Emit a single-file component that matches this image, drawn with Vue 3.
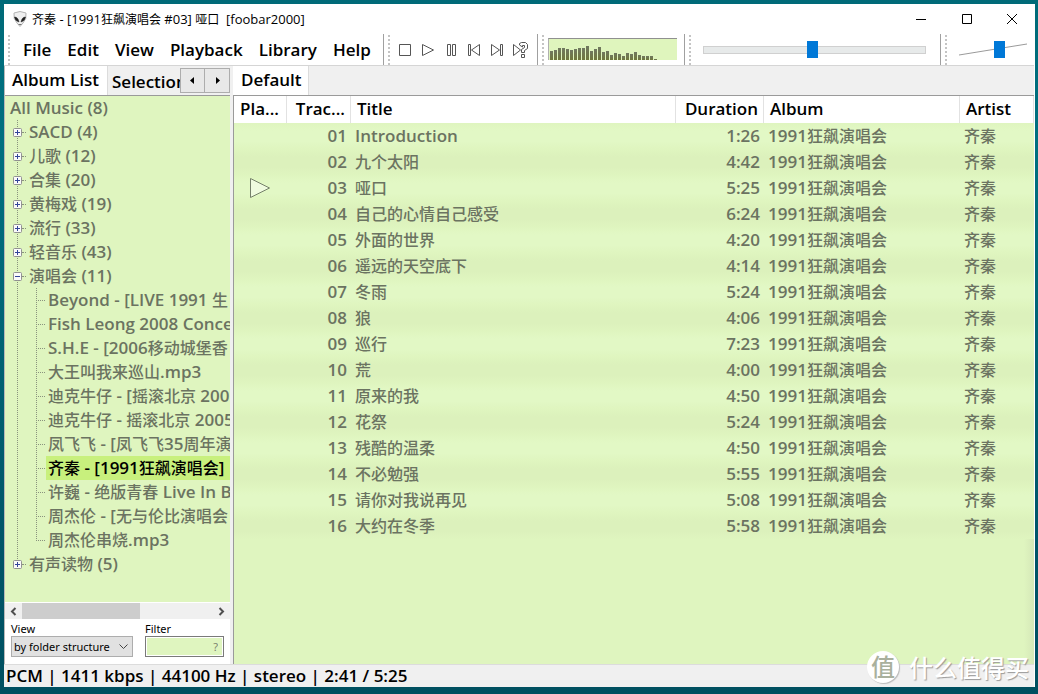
<script setup>
import { ref } from 'vue'

const menus = ['File', 'Edit', 'View', 'Playback', 'Library', 'Help']

const levels = [9, 10, 12, 12, 11, 10, 11, 12, 12, 14, 9, 11, 13, 8, 9, 5, 7, 6, 4, 7, 6, 8, 5, 4, 4, 4, 1]

const folders = [
  { name: 'SACD (4)' },
  { name: '儿歌 (12)' },
  { name: '合集 (20)' },
  { name: '黄梅戏 (19)' },
  { name: '流行 (33)' },
  { name: '轻音乐 (43)' },
  {
    name: '演唱会 (11)',
    children: [
      'Beyond - [LIVE 1991 生',
      'Fish Leong 2008 Conce',
      'S.H.E - [2006移动城堡香',
      '大王叫我来巡山.mp3',
      '迪克牛仔 - [摇滚北京 200',
      '迪克牛仔 - 摇滚北京 2005',
      '凤飞飞 - [凤飞飞35周年演',
      '齐秦 - [1991狂飙演唱会]',
      '许巍 - 绝版青春 Live In B',
      '周杰伦 - [无与伦比演唱会',
      '周杰伦串烧.mp3'
    ]
  },
  { name: '有声读物 (5)' }
]
const selected = ref('齐秦 - [1991狂飙演唱会]')

const tracks = [
  ['Introduction', '1:26'],
  ['九个太阳', '4:42'],
  ['哑口', '5:25'],
  ['自己的心情自己感受', '6:24'],
  ['外面的世界', '4:20'],
  ['遥远的天空底下', '4:14'],
  ['冬雨', '5:24'],
  ['狼', '4:06'],
  ['巡行', '7:23'],
  ['荒', '4:00'],
  ['原来的我', '4:50'],
  ['花祭', '5:24'],
  ['残酷的温柔', '4:50'],
  ['不必勉强', '5:55'],
  ['请你对我说再见', '5:08'],
  ['大约在冬季', '5:58']
]
const playing = ref(2)
const seek = ref(49)
const volume = ref(60)
const filter = ref('')

// Splits a label into Latin and Han runs, which are set at different sizes.
const runs = (text) =>
  text.split(/([\u4e00-\u9fff]+)/).filter(Boolean).map((t) => ({ t, han: /[\u4e00-\u9fff]/.test(t) }))
</script>

<template>
  <div class="desktop">
    <main class="window">
      <header class="titlebar">
        <svg class="logo" width="14" height="16" viewBox="0 0 14 16">
          <path d="M1 2 Q7 -1 13 2 Q14 8 10 12 L7 15.500 L4 12 Q0 8 1 2Z" fill="#f0f0f0" stroke="#b4b4b4" stroke-width="1" />
          <path d="M1.500 6 Q5 6 6 11 Q2 10 1.500 6Z M12.500 6 Q9 6 8 11 Q12 10 12.500 6Z" fill="#222" stroke="#222" stroke-width="0.500" />
          <path d="M5.500 13.500h3" stroke="#777" />
        </svg>
        <h1><span v-for="(r, i) in runs('齐秦 - [1991狂飙演唱会 #03] 哑口\u00a0 [foobar2000]')" :key="i" :class="{ small: r.han }">{{ r.t }}</span></h1>
        <div class="controls">
          <button aria-label="Minimize"><svg width="12" height="12"><path d="M1 6.500h10" stroke="#000" /></svg></button>
          <button aria-label="Maximize"><svg width="12" height="12"><path d="M1.500 1.500h9v9h-9z" fill="none" stroke="#000" /></svg></button>
          <button aria-label="Close"><svg width="12" height="12"><path d="M1 1l10 10M11 1L1 11" stroke="#000" /></svg></button>
        </div>
      </header>

      <div class="toolbar">
        <nav class="band menu">
          <button v-for="m in menus" :key="m">{{ m }}</button>
        </nav>
        <div class="band transport">
          <button aria-label="Stop"><svg width="17" height="17"><path d="M2.500 3.500h11v11h-11z" /></svg></button>
          <button aria-label="Play"><svg width="17" height="17"><path d="M2.500 3.500v11l11-5.500z" /></svg></button>
          <button aria-label="Pause"><svg width="17" height="17"><path d="M4.500 3.500h3v11h-3zM9.500 3.500h3v11h-3z" /></svg></button>
          <button aria-label="Previous"><svg width="17" height="17"><path d="M2.500 3.500h2v11h-2zM13.500 3.500v11l-8-5.500z" /></svg></button>
          <button aria-label="Next"><svg width="17" height="17"><path d="M11.500 3.500h2v11h-2zM2.500 3.500v11l8-5.500z" /></svg></button>
          <button aria-label="Random">
            <svg width="17" height="17">
              <path d="M1.500 3.500v11l7-5.500zM7.500 4V2.500l2-1h4l2 2v4l-3 2v2h-3v-3l3-2v-2h-2v1.500zM9.500 13.500h3v3h-3z" />
            </svg>
          </button>
        </div>
        <div class="band visual">
          <div class="spectrum">
            <i v-for="(h, i) in levels" :key="i" :style="{ height: h + 'px' }"></i>
          </div>
        </div>
        <div class="band seek">
          <input v-model="seek" type="range" min="0" max="100" aria-label="Seek" />
        </div>
        <div class="band volume">
          <svg width="70" height="13" viewBox="0 0 70 13" preserveAspectRatio="none"><path d="M0 12L69 1" stroke="#999" fill="none" /></svg>
          <input v-model="volume" type="range" min="0" max="100" aria-label="Volume" />
        </div>
      </div>

      <div class="panes">
        <section class="side">
          <div class="tabs">
            <button class="tab active">Album List</button>
            <button class="tab clipped">Selection</button>
            <div class="arrows">
              <button aria-label="Previous tab"><svg width="5" height="7"><path d="M4 0v7L0 3.500z" /></svg></button>
              <button aria-label="Next tab"><svg width="5" height="7"><path d="M1 0v7L5 3.500z" /></svg></button>
            </div>
          </div>

          <div class="tree">
            <div class="root">All Music (8)</div>
            <ul class="folders">
              <li v-for="f in folders" :key="f.name">
                <div class="node">
                  <button class="expander" :aria-label="f.children ? 'Collapse' : 'Expand'">
                    <svg width="9" height="9">
                      <rect x="0.500" y="0.500" width="8" height="8" rx="1" fill="#fafafa" stroke="#919191" />
                      <path :d="f.children ? 'M2 4.500h5' : 'M2 4.500h5M4.500 2v5'" stroke="#33449a" />
                    </svg>
                  </button>
                  <span class="stub"></span>
                  <span class="label"><span v-for="(r, i) in runs(f.name)" :key="i" :class="{ han: r.han }">{{ r.t }}</span></span>
                </div>
                <ul v-if="f.children" class="albums">
                  <li v-for="c in f.children" :key="c">
                    <div class="node" :class="{ selected: c === selected }" @click="selected = c">
                      <span class="stub"></span>
                      <span class="label"><span v-for="(r, i) in runs(c)" :key="i" :class="{ han: r.han }">{{ r.t }}</span></span>
                    </div>
                  </li>
                </ul>
              </li>
            </ul>
          </div>

          <div class="hscroll">
            <button aria-label="Scroll left"><svg width="7" height="9"><path d="M5.500 1L2 4.500 5.500 8" /></svg></button>
            <div class="rail"><div class="thumb"></div></div>
            <button aria-label="Scroll right"><svg width="7" height="9"><path d="M1.500 1L5 4.500 1.500 8" /></svg></button>
          </div>

          <form class="options" @submit.prevent>
            <div class="field">
              <label for="view">View</label>
              <div class="picker">
                <select id="view"><option>by folder structure</option></select>
                <svg width="9" height="6"><path d="M0.500 0.500l4 4 4-4" fill="none" stroke="#444" /></svg>
              </div>
            </div>
            <div class="field narrow">
              <label for="filter">Filter</label>
              <input id="filter" v-model="filter" type="text" placeholder="?" />
            </div>
          </form>
        </section>

        <section class="main">
          <div class="tabs">
            <button class="tab active">Default</button>
          </div>
          <div class="list">
            <table>
              <colgroup>
                <col class="c-play" /><col class="c-no" /><col /><col class="c-time" /><col class="c-album" /><col class="c-artist" />
              </colgroup>
              <thead>
                <tr>
                  <th>Pla...</th>
                  <th class="right">Trac...</th>
                  <th>Title</th>
                  <th class="right">Duration</th>
                  <th>Album</th>
                  <th>Artist</th>
                </tr>
              </thead>
              <tbody>
                <tr v-for="(t, n) in tracks" :key="n" @dblclick="playing = n">
                  <td class="state">
                    <svg v-if="n === playing" width="22" height="22"><path d="M1.500 1.500v19l19-9.500z" fill="#effbdf" stroke="#75806a" /></svg>
                  </td>
                  <td class="right">{{ String(n + 1).padStart(2, '0') }}</td>
                  <td><span v-for="(r, i) in runs(t[0])" :key="i" :class="{ han: r.han }">{{ r.t }}</span></td>
                  <td class="right">{{ t[1] }}</td>
                  <td>1991<span class="han">狂飙演唱会</span></td>
                  <td><span class="han">齐秦</span></td>
                </tr>
              </tbody>
            </table>
          </div>
        </section>
      </div>

      <footer class="status">PCM | 1411 kbps | 44100 Hz | stereo | 2:41 / 5:25</footer>
    </main>

    <div class="watermark"><span class="badge">值</span><span>什么值得买</span></div>
  </div>
</template>

<style>
body {
  background: #00505f;
}
</style>

<style scoped>
* {
  box-sizing: border-box;
}
.desktop {
  position: relative;
  display: flex;
  min-height: 100vh;
  padding: 4px 3px 7px 4px;
  background: linear-gradient(#006a78, #007080 20%, #005468 80%, #005060);
  font: 600 17px/24px "Open Sans", "Noto Sans", "Noto Sans CJK SC", sans-serif;
  color: #000;
}
button {
  font: inherit;
  color: inherit;
  background: none;
  border: 0;
  padding: 0;
}
.han {
  font-size: 16px;
  line-height: 16px;
  font-weight: 500;
  font-family: "Noto Sans CJK SC", sans-serif;
}
.window {
  flex: 1;
  min-width: 0;
  display: flex;
  flex-direction: column;
  background: #fff;
  border-right: 1px solid #fff;
}

.titlebar {
  display: flex;
  align-items: center;
  height: 30px;
  padding-left: 9px;
}
h1 {
  flex: 1;
  margin: 0 0 0 5px;
  font: 400 13px/16px "Open Sans", "Noto Sans CJK SC", sans-serif;
}
.small {
  font-size: 12px;
  line-height: 12px;
}
.controls {
  display: flex;
}
.controls button {
  width: 46px;
  height: 28px;
  display: grid;
  place-items: center;
}
.controls button:last-child {
  width: 44px;
}

.toolbar {
  display: flex;
  height: 32px;
  border-bottom: 1px solid #d5d5d5;
}
.band {
  display: flex;
  align-items: center;
  padding-left: 9px;
  border-right: 1px solid #a0a0a0;
  background: repeating-linear-gradient(#c4c4c4 0 2px, transparent 2px 4px) 4px 1px / 2px 100% no-repeat;
}
.band:last-child {
  border-right: 0;
}
.menu {
  padding-right: 4px;
  padding-left: 11px;
}
.menu button {
  padding: 0 8px;
}
.transport {
  padding: 0 8px 0 13px;
  gap: 6px;
}
.transport svg {
  display: block;
  fill: none;
  stroke: #555;
}
.visual {
  padding: 0 7px 2px 10px;
}
.spectrum {
  display: flex;
  align-items: flex-end;
  gap: 1px;
  width: 129px;
  height: 22px;
  padding-left: 1px;
  background: #dff5bd;
  border-top: 1px solid #909090;
  border-left: 1px solid #b0b0b0;
}
.spectrum i {
  width: 3px;
  background: linear-gradient(#707860, #70783c);
}
input[type="range"] {
  appearance: none;
  margin: 0;
  height: 17px;
  background: transparent;
  min-width: 0;
}
input[type="range"]::-webkit-slider-runnable-track {
  height: 17px;
}
input[type="range"]::-webkit-slider-thumb {
  appearance: none;
  width: 11px;
  height: 17px;
  background: #0078d7;
}
.seek {
  flex: 1;
  padding: 0 14px 0 18px;
}
.seek input {
  width: 100%;
  background: linear-gradient(#d0d0d0, #d0d0d0) center / 100% 8px no-repeat;
}
.seek input::-webkit-slider-runnable-track {
  background: linear-gradient(#e7eaea, #e7eaea) center / calc(100% - 2px) 6px no-repeat;
}
.volume {
  display: grid;
  width: 93px;
  padding: 0 6px 0 18px;
}
.volume > * {
  grid-area: 1 / 1;
  width: 100%;
}

.panes {
  flex: 1;
  display: flex;
  background: #f0f0f0;
}
.side {
  display: flex;
  flex-direction: column;
  width: 226px;
  margin-right: 3px;
  border-left: 1px solid #b8b8b8;
}
.main {
  flex: 1;
  min-width: 0;
  display: flex;
  flex-direction: column;
}
.tabs {
  display: flex;
  height: 29px;
}
.tab {
  padding: 0 6px 2px 8px;
  border-right: 1px solid #dcdcdc;
  white-space: nowrap;
}
.tab.active {
  background: #fff;
}
.tab.clipped {
  flex: 1;
  min-width: 0;
  padding: 3px 0 0 4px;
  border: 0;
  overflow: hidden;
  text-align: left;
}
.side .tab.active {
  padding: 0 8px 2px 7px;
}
.arrows {
  display: flex;
  height: 25px;
  margin-top: 2px;
}
.arrows button {
  width: 25px;
  display: grid;
  place-items: center;
  border: 1px solid #adadad;
  background: #e8e8e8;
}
.arrows button + button {
  border-left: 0;
}

.tree {
  flex: 1;
  overflow: hidden;
  background: #dff5bf;
  border-top: 1px solid #9a9a9a;
  color: #6b7361;
  white-space: nowrap;
}
.root {
  padding-left: 5px;
}
ul {
  margin: 0;
  padding: 0;
  list-style: none;
}
.folders > li {
  padding-left: 8px;
  background: repeating-linear-gradient(#8a937e 0 1px, transparent 1px 2px) 12px 0 / 1px 100% no-repeat;
}
.folders > li:last-child {
  background-size: 1px 12px;
}
.albums {
  padding-left: 23px;
}
.albums > li {
  background: repeating-linear-gradient(#8a937e 0 1px, transparent 1px 2px) 0 0 / 1px 100% no-repeat;
}
.albums > li:last-child {
  background-size: 1px 12px;
}
.node {
  display: flex;
  align-items: center;
  height: 24px;
}
.expander {
  display: flex;
}
.stub {
  flex: none;
  width: 4px;
  margin-right: 1px;
  border-top: 1px dotted #8a937e;
}
.albums .stub {
  width: 9px;
}
.label {
  flex: 1;
  height: 24px;
  padding-left: 2px;
}
.selected .label {
  background: #c8f07d;
  color: #000;
}

.hscroll {
  display: flex;
  height: 17px;
  border-top: 1px solid #fff;
  background: #f0f0f0;
}
.hscroll button {
  width: 17px;
  display: grid;
  place-items: center;
}
.hscroll path {
  fill: none;
  stroke: #505050;
  stroke-width: 2;
}
.rail {
  flex: 1;
}
.thumb {
  width: 118px;
  height: 100%;
  background: #cdcdcd;
}

.options {
  display: flex;
  gap: 12px;
  height: 45px;
  padding: 3px 6px 0;
  background: #fff;
  font: 400 11px/14px "Noto Sans", sans-serif;
}
.field {
  display: flex;
  flex-direction: column;
  flex: 1;
}
.narrow {
  flex: none;
  width: 79px;
}
.picker {
  display: grid;
  align-items: center;
}
.picker > * {
  grid-area: 1 / 1;
}
.picker svg {
  justify-self: end;
  margin-right: 5px;
  pointer-events: none;
}
select,
input[type="text"] {
  width: 100%;
  height: 21px;
  margin: 0;
  font: inherit;
  color: #000;
  border: 1px solid #adadad;
  border-radius: 0;
}
select {
  appearance: none;
  padding: 0 2px;
  background: #e1e1e1;
}
input[type="text"] {
  padding: 0 5px;
  background: #dff5bf;
  border-color: #7a7a7a;
  box-shadow: inset 0 0 0 1px #fff;
  text-align: right;
}
input::placeholder {
  color: #7b8370;
  opacity: 1;
}

.list {
  flex: 1;
  border-top: 1px solid #9a9a9a;
  border-left: 1px solid #9a9a9a;
  background: linear-gradient(to left, #d5e8b8, #dff5bf 10px);
}
table {
  width: 100%;
  table-layout: fixed;
  border-collapse: separate;
  border-spacing: 0;
}
.c-play {
  width: 53px;
}
.c-no {
  width: 64px;
}
.c-time {
  width: 88px;
}
.c-album {
  width: 196px;
}
.c-artist {
  width: 74px;
}
th {
  height: 27px;
  padding: 0 5px 1px 6px;
  background: #fff;
  border-right: 1px solid #e2e2e2;
  font-weight: 600;
  line-height: 20px;
  text-align: left;
  white-space: nowrap;
}
td {
  height: 26px;
  padding: 0 4px;
  color: #6b7361;
  white-space: nowrap;
}
tbody tr {
  background: linear-gradient(#dff5bf, #e2f8c5 30%, #e2f8c5 70%, #dff5bf);
}
tbody tr:nth-child(even) {
  background: linear-gradient(#dff5bf, #dcf1bc 30%, #dcf1bc 70%, #dff5bf);
}
.right {
  text-align: right;
}
.state svg {
  display: block;
  margin-left: 11px;
}

.status {
  height: 23px;
  padding-left: 2px;
  border-top: 1px solid #dcdcdc;
  background: #f0f0f0;
  line-height: 22px;
  white-space: nowrap;
}

.watermark {
  position: absolute;
  right: 9px;
  bottom: 10px;
  display: flex;
  align-items: center;
  gap: 10px;
  color: #fff;
  font: 500 24px/34px "Noto Sans CJK SC", sans-serif;
  text-shadow: 1px 1px 1px #999;
  pointer-events: none;
}
.badge {
  width: 32px;
  height: 32px;
  border-radius: 50%;
  background: #fff;
  color: #a9b09d;
  line-height: 30px;
  text-align: center;
  text-shadow: none;
  box-shadow: 1px 1px 1px #bbb;
}
</style>
